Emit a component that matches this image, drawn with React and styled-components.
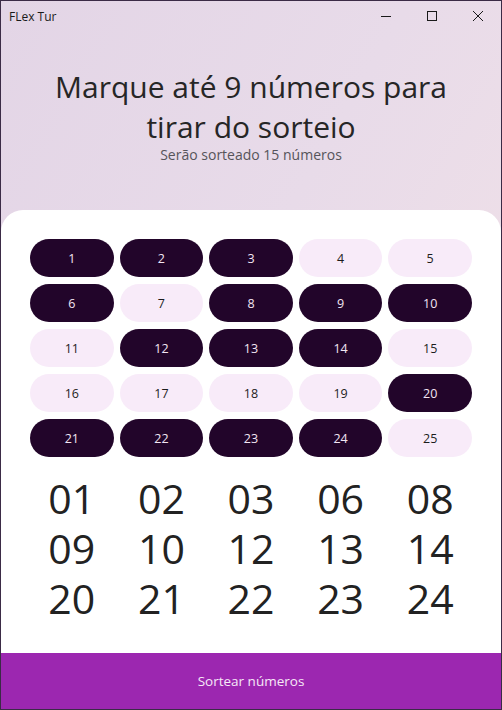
import React, { useState } from 'react'
import styled, { createGlobalStyle } from 'styled-components'

const GlobalStyle = createGlobalStyle`
  html, body {
    margin: 0;
    padding: 0;
  }
  body {
    font-family: 'Open Sans', 'Noto Sans', 'Liberation Sans', sans-serif;
  }
`

const Window = styled.div`
  box-sizing: border-box;
  width: 502px;
  height: 710px;
  display: flex;
  flex-direction: column;
  border: 1px solid #3b2b46;
  background: linear-gradient(120deg, #e3d5e6 0%, #e8dbe9 45%, #eedfe8 75%, #f1e0e2 100%);
  overflow: hidden;
`
const TitleBar = styled.div`
  height: 32px;
  display: flex;
  align-items: center;
  padding-left: 8px;
  font-size: 12px;
  color: #1a1a1a;
`
const AppName = styled.span`
  flex: 1;
  margin-top: -2px;
`
const Caption = styled.button`
  width: 46px;
  height: 32px;
  border: none;
  background: transparent;
  display: flex;
  align-items: center;
  justify-content: center;
  padding: 0;
  margin-top: -2px;
  color: #1a1a1a;
`
const Header = styled.div`
  height: 177px;
  padding-top: 34px;
  box-sizing: border-box;
  text-align: center;
`
const Title = styled.h1`
  margin: 0 auto;
  width: 430px;
  font-size: 30px;
  font-weight: 400;
  line-height: 40px;
  color: #262626;
`
const Subtitle = styled.p`
  margin: -2px 0 0;
  font-size: 14px;
  line-height: 20px;
  color: #56545a;
`
const Card = styled.div`
  flex: 1;
  background: #fff;
  border-radius: 22px 22px 0 0;
  padding: 29px 29px 0;
`
const Board = styled.div`
  display: grid;
  grid-template-columns: repeat(5, 1fr);
  column-gap: 6px;
  row-gap: 7px;
`
const Ball = styled.button`
  height: 38px;
  border: none;
  border-radius: 19px;
  font-family: inherit;
  font-size: 12.5px;
  padding: 0;
  cursor: pointer;
  background: ${(props) => (props.marked ? '#22052a' : '#f8ebf9')};
  color: ${(props) => (props.marked ? '#f3e6f3' : '#1c1c1c')};
`
const Results = styled.div`
  display: grid;
  grid-template-columns: repeat(5, 1fr);
  column-gap: 6px;
  margin-top: 16px;
`
const Drawn = styled.span`
  text-align: center;
  font-size: 41px;
  line-height: 50px;
  color: #222;
`
const DrawButton = styled.button`
  height: 56px;
  border: none;
  background: #9c27b0;
  color: #f6e8f7;
  font-family: inherit;
  font-size: 13.5px;
  cursor: pointer;
`

const initial = [1, 2, 3, 6, 8, 9, 10, 12, 13, 14, 20, 21, 22, 23, 24]

export default function App() {
  const [marked, setMarked] = useState(initial)
  const numbers = Array.from({ length: 25 }, (_, i) => i + 1)

  const toggle = (n) =>
    setMarked((prev) =>
      prev.includes(n) ? prev.filter((m) => m !== n) : [...prev, n].sort((a, b) => a - b)
    )

  return (
    <>
      <GlobalStyle />
      <Window>
        <TitleBar>
          <AppName>FLex Tur</AppName>
          <Caption>
            <svg width='10' height='10' viewBox='0 0 10 10'>
              <line x1='0' y1='5.5' x2='10' y2='5.5' stroke='currentColor' strokeWidth='1' />
            </svg>
          </Caption>
          <Caption>
            <svg width='10' height='10' viewBox='0 0 10 10'>
              <rect x='0.5' y='0.5' width='9' height='9' fill='none' stroke='currentColor' strokeWidth='1' />
            </svg>
          </Caption>
          <Caption>
            <svg width='10' height='10' viewBox='0 0 10 10'>
              <path d='M0 0 L10 10 M10 0 L0 10' stroke='currentColor' strokeWidth='1' />
            </svg>
          </Caption>
        </TitleBar>
        <Header>
          <Title>Marque até 9 números para tirar do sorteio</Title>
          <Subtitle>Serão sorteado 15 números</Subtitle>
        </Header>
        <Card>
          <Board>
            {numbers.map((n) => (
              <Ball key={n} marked={marked.includes(n)} onClick={() => toggle(n)}>
                {n}
              </Ball>
            ))}
          </Board>
          <Results>
            {marked.map((n) => (
              <Drawn key={n}>{String(n).padStart(2, '0')}</Drawn>
            ))}
          </Results>
        </Card>
        <DrawButton>Sortear números</DrawButton>
      </Window>
    </>
  )
}
